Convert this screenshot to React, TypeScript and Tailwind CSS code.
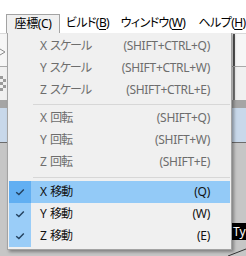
import React from "react";

const font = "font-['Noto_Sans','Noto_Sans_CJK_JP',sans-serif] [font-feature-settings:'palt']";

type Item = {
  axis: string;
  label: string;
  shortcut: string;
  disabled?: boolean;
  checked?: boolean;
  active?: boolean;
};

const scaleItems: Item[] = [
  { axis: "X", label: "スケール", shortcut: "(SHIFT+CTRL+Q)", disabled: true },
  { axis: "Y", label: "スケール", shortcut: "(SHIFT+CTRL+W)", disabled: true },
  { axis: "Z", label: "スケール", shortcut: "(SHIFT+CTRL+E)", disabled: true },
];

const rotateItems: Item[] = [
  { axis: "X", label: "回転", shortcut: "(SHIFT+Q)", disabled: true },
  { axis: "Y", label: "回転", shortcut: "(SHIFT+W)", disabled: true },
  { axis: "Z", label: "回転", shortcut: "(SHIFT+E)", disabled: true },
];

const moveItems: Item[] = [
  { axis: "X", label: "移動", shortcut: "(Q)", checked: true, active: true },
  { axis: "Y", label: "移動", shortcut: "(W)", checked: true },
  { axis: "Z", label: "移動", shortcut: "(E)", checked: true },
];

const Check = () => (
  <svg width="10" height="8" viewBox="0 0 10 8">
    <path d="M1.2 4.2 L3.9 6.6 L8.8 1.4" fill="none" stroke="#24415e" strokeWidth="1.4" />
  </svg>
);

const MenuRow = ({ item }: { item: Item }) => {
  let cell = "";
  if (item.checked) cell = item.active ? "bg-[#62aff2]" : "bg-[#9acdf8]";
  return (
    <div className="flex h-[22px]">
      <div className={`w-[22px] h-full flex items-center justify-center ${cell}`}>
        {item.checked && <Check />}
      </div>
      <div
        className={`flex-1 h-full flex items-center justify-between pl-[9px] pr-[20px] ${
          item.active ? "bg-[#93caf7]" : ""
        } ${item.disabled ? "text-[#6d6d6d]" : "text-[#111111]"}`}
      >
        <span>
          {item.axis} <span className="tracking-[-1px]">{item.label}</span>
        </span>
        <span className="tracking-[-0.3px]">{item.shortcut}</span>
      </div>
    </div>
  );
};

const Separator = ({ h }: { h: string }) => (
  <div className={`${h} flex items-center pl-[24px]`}>
    <div className="h-px w-full bg-[#d7d7d7]" />
  </div>
);

const MenuBarItem = ({ w, label, mn }: { w: string; label: string; mn: string }) => (
  <div className={`${w} shrink-0 h-full flex items-center justify-center`}>
    <span className="tracking-[-0.6px]">
      {label}(<span className="underline underline-offset-2">{mn}</span>)
    </span>
  </div>
);

export default function App() {
  return (
    <div className={`relative w-[246px] h-[256px] overflow-hidden bg-[#c6c6c6] text-[12px] ${font}`}>
      <div className="h-[13px] bg-white" />
      <div className="relative z-20 h-[20px] bg-white flex pl-[6px] text-black">
        <div className="w-[54px] shrink-0 mt-[1px] h-[19px] bg-[#f0f0f0] border-t border-l border-r border-[#a3a3a3] flex items-center justify-center tracking-[-0.4px]">
          座標(C)
        </div>
        <MenuBarItem w="w-[55px]" label="ビルド" mn="B" />
        <MenuBarItem w="w-[76px]" label="ウィンドウ" mn="W" />
        <MenuBarItem w="w-[62px]" label="ヘルプ" mn="H" />
      </div>

      <div className="h-[34px] bg-[#f6f6f6] border-t border-[#d9d9d9] border-b border-b-[#a9a9a9] flex items-center justify-between">
        <svg width="7" height="10" viewBox="0 0 7 10" className="mt-[4px]">
          <path d="M0 2 L5 5 L0 8" fill="none" stroke="#8a8a8a" strokeWidth="1" />
        </svg>
        <div className="w-[2px] h-full bg-[#555555] mr-[11px]" />
      </div>
      <div className="h-[33px] bg-[#f0f0f0] flex items-center justify-between">
        <svg width="7" height="16" viewBox="0 0 7 16">
          <rect x="0" y="0" width="3" height="3" fill="#9a9a9a" />
          <rect x="3" y="3" width="3" height="3" fill="#9a9a9a" />
          <rect x="0" y="6" width="3" height="3" fill="#9a9a9a" />
          <rect x="3" y="9" width="3" height="3" fill="#9a9a9a" />
          <rect x="0" y="12" width="3" height="3" fill="#9a9a9a" />
        </svg>
        <div className="w-[2px] h-full bg-[#7a7a7a] mr-[11px]" />
      </div>
      <div className="h-[8px] bg-[#a5a5a5]" />
      <div className="h-[35px] bg-[#c8d8ea] border-b border-[#6c6c6c]" />

      <div className="absolute left-[232px] top-[223px] h-[17px] bg-black text-white pl-[1px] pr-[4px] flex items-center">
        Typ
      </div>
      <svg className="absolute left-[228px] top-[248px]" width="18" height="8" viewBox="0 0 18 8">
        <path d="M0 8 L18 1" stroke="#333333" strokeWidth="1" />
      </svg>

      <div className="absolute z-10 left-[7px] top-[32px] w-[225px] h-[218px] bg-[#f0f0f0] border border-[#a3a3a3] px-[1px] pt-[2px] pb-[2px] shadow-[2px_2px_3px_rgba(0,0,0,0.35)]">
        {scaleItems.map((it) => (
          <MenuRow key={it.axis + it.label} item={it} />
        ))}
        <Separator h="h-[6px]" />
        {rotateItems.map((it) => (
          <MenuRow key={it.axis + it.label} item={it} />
        ))}
        <Separator h="h-[8px]" />
        {moveItems.map((it) => (
          <MenuRow key={it.axis + it.label} item={it} />
        ))}
      </div>
    </div>
  );
}
